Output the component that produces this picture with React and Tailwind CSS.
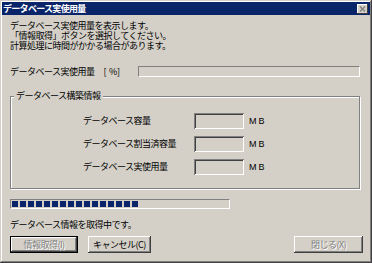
import React from "react";

const F = "font-['Noto_Sans_CJK_JP','Noto_Sans',sans-serif]";

function Block() {
  return <div className="w-[6px] h-full bg-[#0a246a]" />;
}

export default function App() {
  const blocks = Array.from({ length: 16 });
  return (
    <div className={`w-[372px] h-[263px] bg-[#d4d0c8] p-[2px] flex flex-col shadow-[inset_-1px_-1px_0_#404040,inset_1px_1px_0_#d4d0c8,inset_-2px_-2px_0_#808080,inset_2px_2px_0_#ffffff] ${F} text-[9px] leading-[10px] tracking-[-0.5px] text-black`}>
      {/* title bar */}
      <div className="h-[13px] bg-[#0a246a] flex items-center pl-[1px] pr-[2px]">
        <span className="text-white font-bold tracking-[-0.7px]">データベース実使用量</span>
        <div className="ml-auto w-[11px] h-[10px] bg-[#d4d0c8] flex items-center justify-center shadow-[inset_-1px_-1px_0_#404040,inset_1px_1px_0_#fff]">
          <svg width="7" height="6" viewBox="0 0 7 6">
            <path d="M1 0.5 L6 5.5 M6 0.5 L1 5.5" stroke="#808080" strokeWidth="1.3" />
          </svg>
        </div>
      </div>

      <div className="flex flex-col pl-[8px] pr-[8px]">
        <div className="mt-[6px] flex flex-col">
          <div>データベース実使用量を表示します。</div>
          <div>「情報取得」ボタンを選択してください。</div>
          <div>計算処理に時間がかかる場合があります。</div>
        </div>

        <div className="mt-[15px] h-[11px] flex items-center">
          <div className="w-[128px] flex items-center">
            <span>データベース実使用量</span>
            <span className="ml-[9px]">[</span>
            <span className="ml-[3px]">%]</span>
          </div>
          <div className="w-[222px] h-[11px] border border-t-[#808080] border-l-[#808080] border-b-white border-r-white" />
        </div>

        <div className="relative mt-[19px] w-[350px] h-[93px] border border-[#808080] shadow-[1px_1px_0_#fff,inset_1px_1px_0_#fff] pt-[16px]">
          <span className="absolute -top-[6px] left-[3px] px-[2px] bg-[#d4d0c8]">データベース構築情報</span>
          <div className="flex flex-col gap-[7px] pl-[72px]">
            {["データベース容量", "データベース割当済容量", "データベース実使用量"].map((l) => (
              <div key={l} className="h-[16px] flex items-center">
                <span className="w-[111px]">{l}</span>
                <div className="w-[50px] h-[16px] shadow-[inset_1px_1px_0_#808080,inset_-1px_-1px_0_#fff,inset_2px_2px_0_#404040,inset_-2px_-2px_0_#d4d0c8]" />
                <span className="ml-[5px] font-['Liberation_Sans',sans-serif] tracking-[2px]">MB</span>
              </div>
            ))}
          </div>
        </div>

        <div className="mt-[10px] w-[220px] h-[10px] border border-t-[#808080] border-l-[#808080] border-b-white border-r-white p-[1px] flex gap-[2px]">
          {blocks.map((_, i) => (
            <Block key={i} />
          ))}
        </div>

        <div className="mt-[11px]">データベース情報を取得中です。</div>

        <div className="mt-[6px] flex items-center">
          <div className="w-[68px] h-[17px] border border-black flex items-center justify-center shadow-[inset_-1px_-1px_0_#404040,inset_1px_1px_0_#fff,inset_-2px_-2px_0_#808080] text-[#808080] [text-shadow:1px_1px_0_#fff]">
            情報取得(I)
          </div>
          <div className="ml-[10px] w-[63px] h-[17px] flex items-center justify-center shadow-[inset_-1px_-1px_0_#404040,inset_1px_1px_0_#fff,inset_-2px_-2px_0_#808080]">
            キャンセル(C)
          </div>
          <div className="ml-auto mr-[-1px] w-[69px] h-[17px] flex items-center justify-center shadow-[inset_-1px_-1px_0_#404040,inset_1px_1px_0_#fff,inset_-2px_-2px_0_#808080] text-[#808080] [text-shadow:1px_1px_0_#fff]">
            閉じる(X)
          </div>
        </div>
      </div>
    </div>
  );
}
